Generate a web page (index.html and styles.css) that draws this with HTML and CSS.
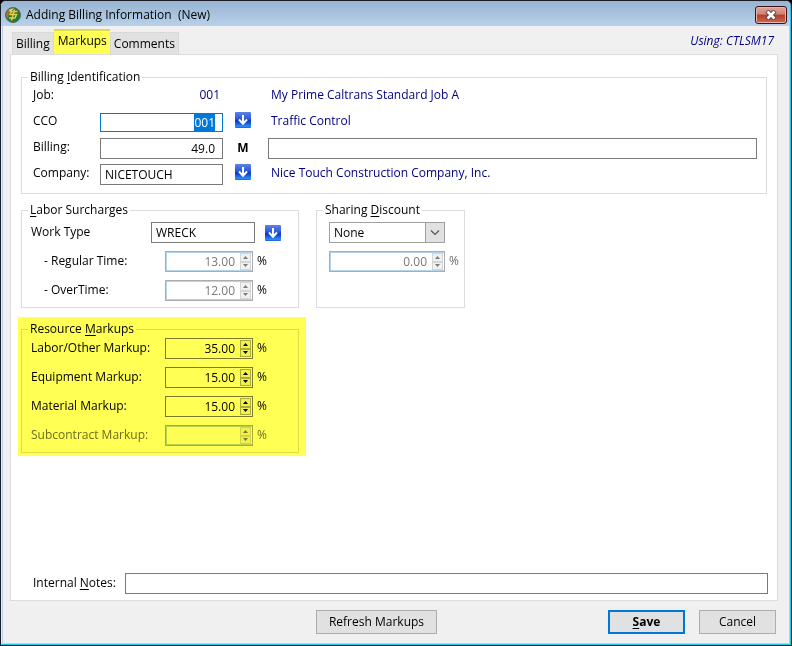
FILE: index.html
```html
<!DOCTYPE html>
<html lang="en">
<head>
  <meta charset="UTF-8">
  <title>Adding Billing Information (New)</title>
  <link rel="stylesheet" href="styles.css">
</head>
<body>
  <svg class="symbols" aria-hidden="true">
    <defs>
      <linearGradient id="blue" x1="0" y1="0" x2="0" y2="1">
        <stop offset="0" stop-color="#5c84e6"></stop>
        <stop offset="0.45" stop-color="#2a56d8"></stop>
        <stop offset="0.55" stop-color="#0c34c4"></stop>
        <stop offset="0.9" stop-color="#2c8cf8"></stop>
        <stop offset="1" stop-color="#1c5cd0"></stop>
      </linearGradient>
      <symbol id="lookup" viewBox="0 0 16 16">
        <rect width="16" height="16" rx="1" fill="url(#blue)"></rect>
        <path d="M8 3v9M4 7.500l4 4.200 4-4.200" fill="none" stroke="#fff" stroke-width="2"></path>
      </symbol>
      <symbol id="up" viewBox="0 0 5 3"><path d="M0 3L2.500 0 5 3z" fill="currentColor"></path></symbol>
      <symbol id="down" viewBox="0 0 5 3"><path d="M0 0L2.500 3 5 0z" fill="currentColor"></path></symbol>
    </defs>
  </svg>

  <div class="window">
    <header class="titlebar">
      <svg class="logo" viewBox="0 0 16 16" aria-hidden="true">
        <circle cx="8" cy="8" r="7.500" fill="#237a35" stroke="#5c6a50"></circle>
        <path d="M1 8a7 7 0 0 1 8-7L4 6l-1 6a7 7 0 0 1-2-4z" fill="#a8742c"></path>
        <path d="M4 3a7 7 0 0 1 5-1.500L5 5z" fill="#d8d8b0"></path>
        <path d="M12.500 4.500H6.500L5 7.500h6.500L10 11H4M9.500 2.500L6.500 13.500" fill="none" stroke="#ecc84c" stroke-width="1.500"></path>
      </svg>
      <h1>Adding Billing Information &nbsp;(New)</h1>
      <button class="close" aria-label="Close">
        <svg viewBox="0 0 12 10"><path d="M2 1l8 8M10 1l-8 8" stroke="#54404a" stroke-width="4.500"></path><path d="M2.500 1.500l7 7M9.500 1.500l-7 7" stroke="#fff" stroke-width="2.600"></path></svg>
      </button>
    </header>

    <div class="tab-row">
      <nav class="tabs">
        <button class="tab">Billing</button>
        <button class="tab active">Markups</button>
        <button class="tab">Comments</button>
      </nav>
      <span class="using">Using: CTLSM17</span>
    </div>

    <main class="panel">
      <fieldset>
        <legend>Billing <u>I</u>dentification</legend>
        <div class="ident">
          <span class="label">Job:</span>
          <span class="value job">001</span>
          <span class="value wide">My Prime Caltrans Standard Job A</span>

          <label for="cco">CCO</label>
          <div class="field focused"><input id="cco" class="number" type="text" value="001"></div>
          <button class="lookup" aria-label="Look up CCO"><svg><use href="#lookup"></use></svg></button>
          <span class="value">Traffic Control</span>

          <label for="billing">Billing:</label>
          <input id="billing" class="number" type="text" value="49.0">
          <b class="flag">M</b>
          <div class="description"><input type="text" aria-label="Billing description"></div>

          <label for="company">Company:</label>
          <input id="company" type="text" value="NICETOUCH">
          <button class="lookup" aria-label="Look up company"><svg><use href="#lookup"></use></svg></button>
          <span class="value">Nice Touch Construction Company, Inc.</span>
        </div>
      </fieldset>

      <div class="groups">
        <fieldset>
          <legend><u>L</u>abor Surcharges</legend>
          <div class="rows">
            <div class="row work-type">
              <label for="work-type">Work Type</label>
              <input id="work-type" type="text" value="WRECK">
              <button class="lookup" aria-label="Look up work type"><svg><use href="#lookup"></use></svg></button>
            </div>
            <div class="row">
              <label class="indent" for="regular">- Regular Time:</label>
              <div class="spin disabled">
                <input id="regular" type="text" value="13.00" disabled>
                <span class="arrows">
                  <button disabled aria-label="Increase"><svg><use href="#up"></use></svg></button>
                  <button disabled aria-label="Decrease"><svg><use href="#down"></use></svg></button>
                </span>
              </div>
              <span>%</span>
            </div>
            <div class="row">
              <label class="indent" for="overtime">- OverTime:</label>
              <div class="spin disabled">
                <input id="overtime" type="text" value="12.00" disabled>
                <span class="arrows">
                  <button disabled aria-label="Increase"><svg><use href="#up"></use></svg></button>
                  <button disabled aria-label="Decrease"><svg><use href="#down"></use></svg></button>
                </span>
              </div>
              <span>%</span>
            </div>
          </div>
        </fieldset>

        <fieldset>
          <legend>Sharing <u>D</u>iscount</legend>
          <div class="rows sharing">
            <div class="row">
              <div class="select">
                <select aria-label="Sharing discount">
                  <option>None</option>
                </select>
                <svg class="chevron" viewBox="0 0 18 19"><path d="M5 7.500l4 4 4-4" fill="none" stroke="#555" stroke-width="1.200"></path></svg>
              </div>
            </div>
            <div class="row muted">
              <div class="spin disabled">
                <input type="text" value="0.00" aria-label="Discount percent" disabled>
                <span class="arrows">
                  <button disabled aria-label="Increase"><svg><use href="#up"></use></svg></button>
                  <button disabled aria-label="Decrease"><svg><use href="#down"></use></svg></button>
                </span>
              </div>
              <span>%</span>
            </div>
          </div>
        </fieldset>
      </div>

      <div class="highlight">
        <fieldset>
          <legend>Resource <u>M</u>arkups</legend>
          <div class="rows">
            <div class="row">
              <label for="labor">Labor/Other Markup:</label>
              <div class="spin">
                <input id="labor" type="text" value="35.00">
                <span class="arrows">
                  <button aria-label="Increase"><svg><use href="#up"></use></svg></button>
                  <button aria-label="Decrease"><svg><use href="#down"></use></svg></button>
                </span>
              </div>
              <span>%</span>
            </div>
            <div class="row">
              <label for="equipment">Equipment Markup:</label>
              <div class="spin">
                <input id="equipment" type="text" value="15.00">
                <span class="arrows">
                  <button aria-label="Increase"><svg><use href="#up"></use></svg></button>
                  <button aria-label="Decrease"><svg><use href="#down"></use></svg></button>
                </span>
              </div>
              <span>%</span>
            </div>
            <div class="row">
              <label for="material">Material Markup:</label>
              <div class="spin">
                <input id="material" type="text" value="15.00">
                <span class="arrows">
                  <button aria-label="Increase"><svg><use href="#up"></use></svg></button>
                  <button aria-label="Decrease"><svg><use href="#down"></use></svg></button>
                </span>
              </div>
              <span>%</span>
            </div>
            <div class="row muted">
              <label for="subcontract">Subcontract Markup:</label>
              <div class="spin disabled">
                <input id="subcontract" type="text" disabled>
                <span class="arrows">
                  <button disabled aria-label="Increase"><svg><use href="#up"></use></svg></button>
                  <button disabled aria-label="Decrease"><svg><use href="#down"></use></svg></button>
                </span>
              </div>
              <span>%</span>
            </div>
          </div>
        </fieldset>
      </div>

      <div class="notes">
        <label for="notes">Internal <u>N</u>otes:</label>
        <input id="notes" type="text">
      </div>
    </main>

    <footer>
      <button class="btn refresh">Refresh Markups</button>
      <button class="btn save"><u>S</u>ave</button>
      <button class="btn">Cancel</button>
    </footer>
  </div>

  <script>
    // start with the CCO number selected
    const cco = document.getElementById('cco');
    cco.focus();
    cco.select();
  </script>
</body>
</html>
```
FILE: styles.css
```css
* {
  box-sizing: border-box;
}

body {
  margin: 0;
  background-color: #000;
  color: #000;
  font: 12px/16px "Open Sans", "Noto Sans", sans-serif;
}

button, input, select {
  font: inherit;
  color: inherit;
  margin: 0;
  padding: 0;
  border: none;
  border-radius: 0;
  outline: none;
}

u {
  text-underline-offset: 2px;
}

svg {
  display: block;
}

.symbols {
  position: absolute;
  width: 0;
  height: 0;
}

.window {
  display: flex;
  flex-direction: column;
  min-height: 100vh;
  border: 1px solid #1c1c24;
  border-radius: 6px 6px 0 0;
  background-color: #f0f0f0;
  box-shadow: inset -1px -1px #1ec8e8, inset 1px 1px #e4eef8, inset 2px 0 #b9d1ea, inset -2px -2px #b9d1ea;
}

/* title bar */
.titlebar {
  display: flex;
  align-items: center;
  gap: 5px;
  height: 25px;
  margin-right: 1px;
  padding: 2px 3px 0 4px;
  border-radius: 5px 5px 0 0;
  background: linear-gradient(#98b4d2, #b9d1ea);
}

.logo {
  width: 16px;
  height: 16px;
}

h1 {
  flex: 1;
  margin: 0;
  font-size: 12px;
  font-weight: normal;
}

.close {
  display: grid;
  place-items: center;
  width: 32px;
  height: 18px;
  border: 1px solid #42101a;
  border-radius: 3px;
  background: linear-gradient(#e0a498, #cf8373 45%, #b83c26 50%, #cc6a50);
  box-shadow: inset 0 0 0 1px #e6b4aa;
}

.close svg {
  width: 12px;
  height: 10px;
}

/* tabs */
.tab-row {
  display: flex;
  align-items: flex-end;
  justify-content: space-between;
  height: 28px;
  padding: 0 17px 0 11px;
}

.tabs {
  display: flex;
  align-items: flex-end;
}

.tab {
  height: 22px;
  padding: 0 3px;
  border: 1px solid #d9d9d9;
  border-bottom: none;
  background-color: #e1e1e1;
}

.tab.active {
  height: 25px;
  padding: 0 3px 3px 4px;
  border-width: 2px 0 0;
  border-color: #dcdc4a;
  background-color: #ffff54;
}

.using {
  align-self: center;
  padding-top: 2px;
  color: #000080;
  font-style: italic;
}

/* main panel */
.panel {
  flex: 1;
  display: flex;
  flex-direction: column;
  margin: 0 13px 0 9px;
  padding: 14px 10px 6px;
  border: 1px solid #dcdcdc;
  background-color: #fff;
}

fieldset {
  min-width: 0;
  margin: 0;
  padding: 0 6px;
  border: 1px solid #dcdcdc;
}

legend {
  padding: 0 2px;
}

input, select {
  width: 100%;
  min-width: 0;
  height: 21px;
  padding: 0 4px;
  border: 1px solid #7a7a7a;
  background-color: #fff;
}

.number {
  padding-right: 7px;
  text-align: right;
}

label, .label {
  padding-bottom: 2px;
}

.ident {
  display: grid;
  grid-template-columns: 67px 123px 40px 1fr;
  grid-auto-rows: 26px;
  align-items: center;
  margin: -2px 3px 0 0;
  padding: 0 0 6px 5px;
}

.ident .lookup, .flag {
  justify-self: center;
}

.ident .lookup {
  margin-bottom: 4px;
}

.description {
  padding-left: 5px;
}

.description input {
  display: block;
}

.value {
  padding: 0 0 2px 8px;
  color: #000080;
}

.value.job {
  padding-right: 3px;
  text-align: right;
}

.value.wide {
  grid-column: 4;
}

.field.focused input {
  display: block;
  height: 19px;
  border-color: #0078d7;
}

input::selection {
  background-color: #0078d7;
  color: #fff;
}

.lookup {
  width: 16px;
  height: 16px;
  background: none;
}

.lookup svg {
  width: 16px;
  height: 16px;
}

.groups {
  display: grid;
  grid-template-columns: 278px 149px;
  gap: 17px;
  margin-top: 8px;
}

.rows {
  display: flex;
  flex-direction: column;
  gap: 8px;
  padding: 4px 0 6px 3px;
}

.row {
  display: grid;
  grid-template-columns: 134px 88px 1fr;
  align-items: center;
}

.row > span {
  padding: 0 0 2px 4px;
}

.row.work-type {
  grid-template-columns: 120px 104px 36px;
  justify-items: center;
}

.work-type label {
  justify-self: start;
}

.indent {
  padding-left: 13px;
}

.sharing .row {
  grid-template-columns: 116px 1fr;
}

.sharing {
  padding-left: 6px;
}

.muted {
  color: #6d6d6d;
}

/* number box with up and down arrows */
.spin {
  display: flex;
  height: 21px;
  padding: 1px;
  border: 1px solid #7a7a7a;
  background-color: #fff;
}

.spin input {
  flex: 1;
  height: auto;
  padding: 0 5px 0 3px;
  border: none;
  background: none;
  text-align: right;
}

.arrows {
  display: grid;
  grid-template-rows: 1fr 1fr;
  width: 11px;
}

.arrows button {
  display: grid;
  place-items: center;
  border: 1px solid #acacac;
  background-color: #f0f0f0;
}

.arrows svg {
  width: 5px;
  height: 3px;
}

.spin.disabled {
  border-color: #ababb0;
  box-shadow: inset 1px 1px #b5d3ec, inset 0 -1px #b5d3ec;
  color: #7a7a7a;
}

.disabled .arrows button {
  border-color: #d4d4d4;
}

.select {
  display: grid;
}

.select select, .chevron {
  grid-area: 1 / 1;
}

.select select {
  appearance: none;
  border-color: #a0a0a0;
}

.chevron {
  justify-self: end;
  width: 20px;
  height: 21px;
  border: 1px solid #a0a0a0;
  background-color: #e1e1e1;
  pointer-events: none;
}

.highlight {
  align-self: flex-start;
  width: 288px;
  margin: 9px 0 0 -3px;
  padding: 4px 7px 3px 3px;
  background-color: #ffff54;
}

.highlight fieldset {
  mix-blend-mode: multiply;
}

.highlight .rows {
  padding-top: 1px;
}

.notes {
  display: grid;
  grid-template-columns: 92px 1fr;
  align-items: center;
  margin: auto -1px 0 0;
  padding-left: 12px;
}

/* bottom buttons */
footer {
  display: flex;
  justify-content: flex-end;
  gap: 14px;
  padding: 9px 15px 11px;
}

.btn {
  width: 77px;
  height: 24px;
  border: 1px solid #adadad;
  background-color: #e1e1e1;
}

.refresh {
  width: 121px;
  margin-right: 157px;
}

.save {
  border: 2px solid #0078d7;
  font-weight: bold;
}
```
